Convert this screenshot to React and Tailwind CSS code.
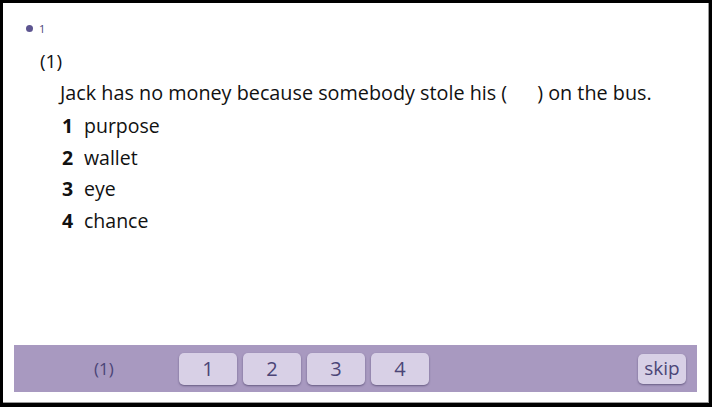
import React from "react";

const choices = ["purpose", "wallet", "eye", "chance"];

const App = () => {
  return (
    <div className="w-[712px] h-[407px] bg-black p-[3px] pr-[3px] pb-[4px]" style={{ fontFamily: "'Open Sans', 'Noto Sans CJK KR', sans-serif" }}>
      <div className="flex h-full flex-col bg-white border-r border-b border-[#9a9a9a]">
        <div className="flex-1 pl-[23px] pt-[20px]">
          <div className="flex items-center gap-[6px] text-[11px] leading-none text-[#4b4577]">
            <span className="h-[7px] w-[7px] rounded-full bg-[#5d5590]" />
            <span>1</span>
          </div>
          <div className="mt-[15px] pl-[14px] text-[19px] leading-[24px] text-[#111]">(1)</div>
          <div className="mt-[7px] pl-[34px] text-[19.8px] leading-[26px] text-[#111]">
            Jack has no money because somebody stole his (<span className="inline-block w-[30px]" />) on the bus.
          </div>
          <div className="mt-[4px] flex flex-col pl-[36px]">
            {choices.map((c, i) => (
              <div key={c} className="flex h-[31.5px] items-center text-[19.5px] text-[#111]">
                <span className="w-[22px] font-bold">{i + 1}</span>
                <span>{c}</span>
              </div>
            ))}
          </div>
        </div>
        <div className="mx-[11px] mb-[10px] flex h-[47px] items-center bg-[#a899c0] pl-[80px] pr-[11px]">
          <span className="w-[85px] text-[17px] text-[#4b4577]">(1)</span>
          <div className="flex gap-[6px]">
            {[1, 2, 3, 4].map((n) => (
              <button
                key={n}
                className="h-[32px] w-[58px] rounded-[5px] bg-[#d8d0e6] text-[20px] leading-none text-[#4b4577] shadow-[0_1px_2px_rgba(60,50,90,0.6)]"
              >
                {n}
              </button>
            ))}
          </div>
          <button className="ml-auto h-[30px] w-[48px] rounded-[5px] bg-[#d8d0e6] text-[19px] leading-none text-[#4b4577] shadow-[0_1px_2px_rgba(60,50,90,0.6)]">
            skip
          </button>
        </div>
      </div>
    </div>
  );
};

export default App;
